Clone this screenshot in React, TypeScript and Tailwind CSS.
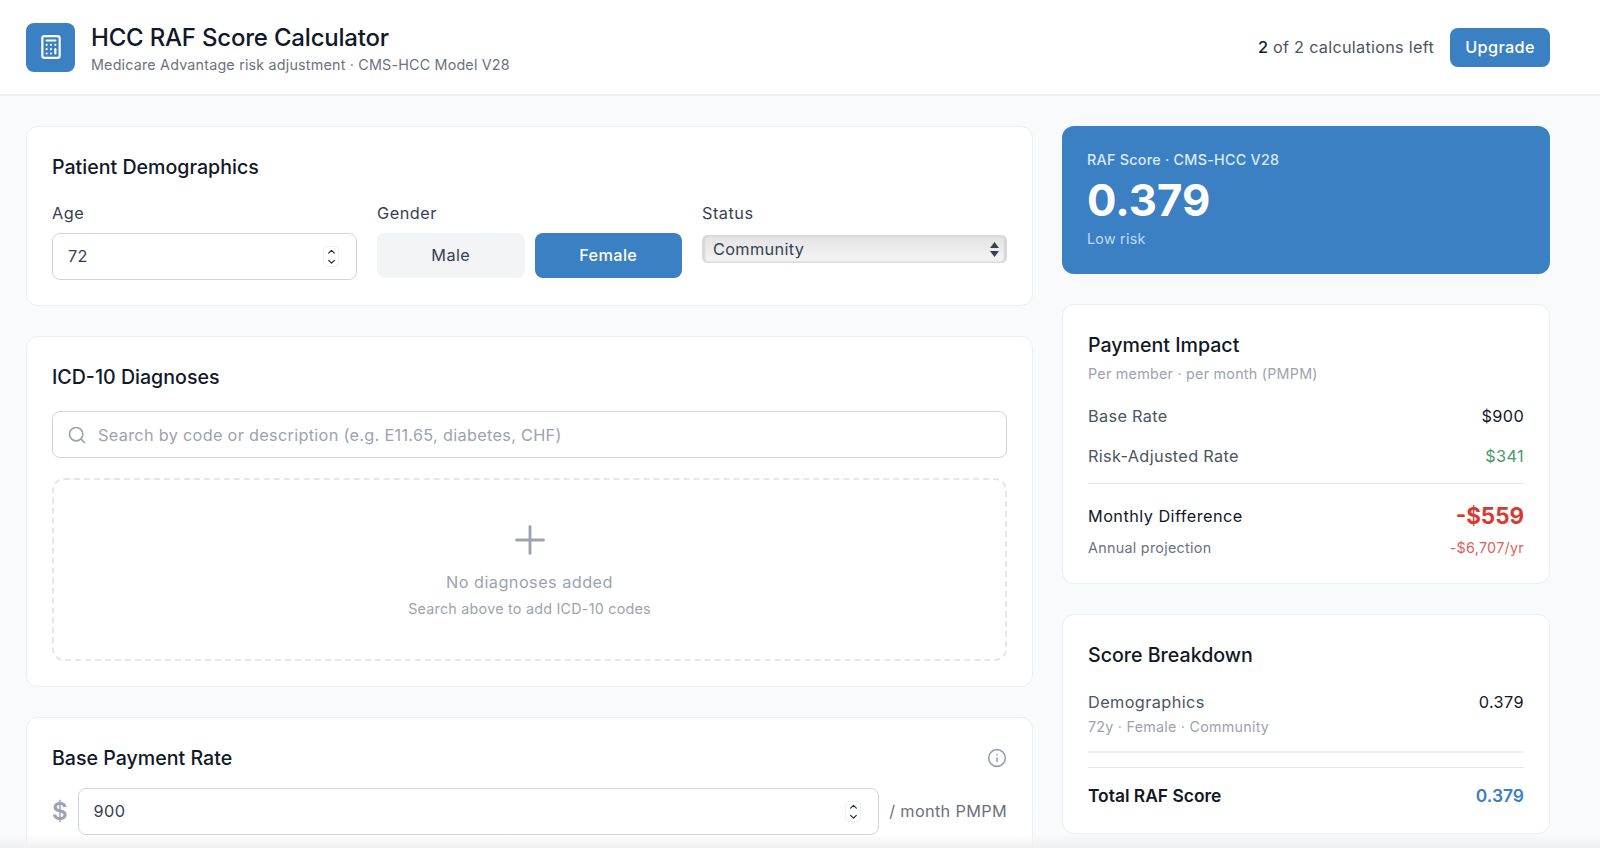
import { Calculator, Search, Plus, Info, ChevronUp, ChevronDown } from "lucide-react";

const font = "font-['Inter',sans-serif]";

function Spinner() {
  return (
    <div className="flex h-[21px] w-[16px] flex-col items-center justify-center rounded-[4px] border border-[#eff0f2] text-[#1f2937]">
      <ChevronUp size={13} strokeWidth={2.4} className="-my-[1px]" />
      <ChevronDown size={13} strokeWidth={2.4} className="-my-[1px]" />
    </div>
  );
}

function Row({ label, value, valueClass }: { label: string; value: string; valueClass: string }) {
  return (
    <div className="flex h-[20px] items-center justify-between text-[16.3px] tracking-[0.33px]">
      <span className="text-[#4b5563]">{label}</span>
      <span className={valueClass}>{value}</span>
    </div>
  );
}

export default function App() {
  return (
    <div className={`${font} relative h-[848px] overflow-hidden bg-[#f9fafb] text-[#111827]`}>
      <header className="flex h-[96px] items-center justify-between border-b-2 border-[#eff0f3] bg-white pl-[26px] pr-[50px]">
        <div className="flex items-center gap-[16px]">
          <div className="flex h-[49px] w-[49px] items-center justify-center rounded-[8px] bg-[#3a80c2] text-white">
            <Calculator size={26} strokeWidth={2} />
          </div>
          <div className="pt-[4px]">
            <h1 className="text-[24px] font-medium leading-[30px] tracking-[-0.2px]">HCC RAF Score Calculator</h1>
            <p className="mt-[2px] text-[14.3px] leading-[20px] tracking-[0.2px] text-[#6b7280]">
              Medicare Advantage risk adjustment · CMS-HCC Model V28
            </p>
          </div>
        </div>
        <div className="flex items-center gap-[16px]">
          <span className="text-[16.3px] tracking-[0.25px] text-[#4b5563]">
            <span className="font-medium text-[#111827]">2</span> of 2 calculations left
          </span>
          <button className="h-[39px] w-[100px] rounded-[8px] bg-[#3a80c2] text-[16.3px] font-medium tracking-[0.33px] text-white">
            Upgrade
          </button>
        </div>
      </header>

      <main className="flex gap-[29px] pl-[26px] pr-[50px] pt-[30px]">
        <div className="flex w-[1007px] flex-col gap-[30px]">
          <section className="h-[180px] rounded-[12px] border border-[#eceef1] bg-white px-[25px] pt-[26px]">
            <h2 className="text-[19.6px] font-medium leading-[28px]">Patient Demographics</h2>
            <div className="mt-[20px] flex gap-[20px]">
              <div className="w-[305px]">
                <label className="block text-[16.3px] leading-[24px] tracking-[0.5px] text-[#374151]">Age</label>
                <div className="mt-[8px] flex h-[47px] items-center justify-between rounded-[8px] border border-[#d1d5db] pl-[15px] pr-[17px]">
                  <input readOnly value="72" className="w-[200px] text-[16.3px] tracking-[0.33px] text-[#374151] outline-none" />
                  <Spinner />
                </div>
              </div>
              <div className="w-[305px]">
                <label className="block text-[16.3px] leading-[24px] tracking-[0.5px] text-[#374151]">Gender</label>
                <div className="mt-[8px] flex gap-[10px]">
                  <button className="h-[45px] flex-1 rounded-[8px] bg-[#f3f4f6] text-[16.3px] tracking-[0.4px] text-[#374151]">
                    Male
                  </button>
                  <button className="h-[45px] flex-1 rounded-[8px] bg-[#3a80c2] text-[16.3px] font-medium tracking-[0.33px] text-white">
                    Female
                  </button>
                </div>
              </div>
              <div className="w-[305px]">
                <label className="block text-[16.3px] leading-[24px] tracking-[0.5px] text-[#374151]">Status</label>
                <div className="relative mt-[10px] h-[28px]">
                  <select className="h-full w-full appearance-none rounded-[5px] border border-[#dcdcdc] bg-gradient-to-b from-[#e3e3e3] to-[#f5f5f5] pl-[10px] text-[16.3px] tracking-[0.33px] text-[#374151] shadow-[inset_2px_0_2px_#d4d4d4,inset_-2px_0_2px_#d4d4d4] outline-none">
                    <option>Community</option>
                  </select>
                  <svg className="absolute right-[8px] top-[7px]" width="9" height="15" viewBox="0 0 9 15" fill="#374151">
                    <path d="M4.5 0 9 6H0zM0 9h9l-4.500 6z" />
                  </svg>
                </div>
              </div>
            </div>
          </section>

          <section className="h-[351px] rounded-[12px] border border-[#eceef1] bg-white px-[25px] pt-[26px]">
            <h2 className="text-[19.6px] font-medium leading-[28px]">ICD-10 Diagnoses</h2>
            <div className="mt-[20px] flex h-[47px] items-center gap-[11px] rounded-[8px] border border-[#d1d5db] pl-[14px]">
              <Search size={20} className="text-[#9ca3af]" />
              <input
                readOnly
                placeholder="Search by code or description (e.g. E11.65, diabetes, CHF)"
                className="w-[800px] pt-[1px] text-[16.3px] tracking-[0.3px] outline-none placeholder:text-[#9ca3af]"
              />
            </div>
            <div className="mt-[20px] flex h-[183px] flex-col items-center justify-center rounded-[12px] border-2 border-dashed border-[#e5e7eb] pt-[3px]">
              <div className="flex h-[34px] items-center justify-center">
                <Plus size={46} strokeWidth={1.5} className="shrink-0 text-[#9ca3af]" />
              </div>
              <p className="mt-[13px] text-[16.3px] leading-[24px] tracking-[0.45px] text-[#9ca3af]">No diagnoses added</p>
              <p className="mt-[5px] text-[14.3px] leading-[20px] tracking-[0.25px] text-[#9ca3af]">Search above to add ICD-10 codes</p>
            </div>
          </section>

          <section className="h-[180px] rounded-[12px] border border-[#eceef1] bg-white px-[25px] pt-[26px]">
            <div className="flex items-center justify-between">
              <h2 className="text-[19.6px] font-medium leading-[28px]">Base Payment Rate</h2>
              <Info size={20} className="text-[#9ca3af]" />
            </div>
            <div className="mt-[16px] flex items-center gap-[10px]">
              <span className="text-[24px] font-semibold text-[#9ca3af]">$</span>
              <div className="flex h-[47px] flex-1 items-center justify-between rounded-[8px] border border-[#d1d5db] pl-[15px] pr-[17px]">
                <input readOnly value="900" className="w-[200px] text-[16.3px] tracking-[0.33px] text-[#374151] outline-none" />
                <Spinner />
              </div>
              <span className="whitespace-nowrap text-[16.3px] tracking-[0.33px] text-[#6b7280]">/ month PMPM</span>
            </div>
          </section>
        </div>

        <div className="flex w-[488px] flex-col gap-[30px]">
          <section className="h-[148px] rounded-[12px] bg-[#3a80c2] px-[25px] pt-[24px] text-white">
            <p className="text-[14.3px] font-medium leading-[20px] tracking-[0.27px] text-[#dbeafe]">RAF Score · CMS-HCC V28</p>
            <p className="pt-[3px] text-[43.7px] font-bold leading-[56px]">0.379</p>
            <p className="text-[14.3px] leading-[20px] tracking-[0.25px] text-[#bfdbfe]">Low risk</p>
          </section>

          <section className="h-[280px] rounded-[12px] border border-[#eceef1] bg-white px-[25px] pt-[26px]">
            <h2 className="text-[19.6px] font-medium leading-[28px]">Payment Impact</h2>
            <p className="mt-[5px] text-[14.3px] leading-[20px] tracking-[0.25px] text-[#9ca3af]">Per member · per month (PMPM)</p>
            <div className="mt-[22px] flex flex-col gap-[20px]">
              <Row label="Base Rate" value="$900" valueClass="text-[#111827]" />
              <Row label="Risk-Adjusted Rate" value="$341" valueClass="text-[#4a9a6e]" />
            </div>
            <div className="mt-[17px] border-t border-[#e5e7eb] pt-[18px]">
              <div className="flex h-[28px] items-center justify-between">
                <span className="text-[16.3px] tracking-[0.45px]">Monthly Difference</span>
                <span className="text-[22.4px] font-bold text-[#d93a30]">-$559</span>
              </div>
              <div className="mt-[8px] flex h-[20px] items-center justify-between text-[14.3px] tracking-[0.3px]">
                <span className="text-[#6b7280]">Annual projection</span>
                <span className="text-[#e0605a]">-$6,707/yr</span>
              </div>
            </div>
          </section>

          <section className="h-[220px] rounded-[12px] border border-[#eceef1] bg-white px-[25px] pt-[26px]">
            <h2 className="text-[19.6px] font-medium leading-[28px]">Score Breakdown</h2>
            <div className="mt-[23px] flex h-[20px] items-center justify-between text-[16.3px] tracking-[0.4px]">
              <span className="text-[#4b5563]">Demographics</span>
              <span className="text-[#111827]">0.379</span>
            </div>
            <p className="mt-[5px] text-[14.3px] leading-[20px] tracking-[0.25px] text-[#9ca3af]">72y · Female · Community</p>
            <div className="mt-[14px] border-t-2 border-[#f0f1f3]" />
            <div className="mt-[14px] border-t border-[#e5e7eb] pt-[17px]">
              <div className="flex h-[22px] items-center justify-between text-[17.4px] font-semibold">
                <span>Total RAF Score</span>
                <span className="text-[#3a80c2]">0.379</span>
              </div>
            </div>
          </section>
        </div>
      </main>

      <div className="absolute inset-x-0 bottom-0 h-[14px] bg-gradient-to-b from-transparent to-[#f0f0f1]" />
    </div>
  );
}
